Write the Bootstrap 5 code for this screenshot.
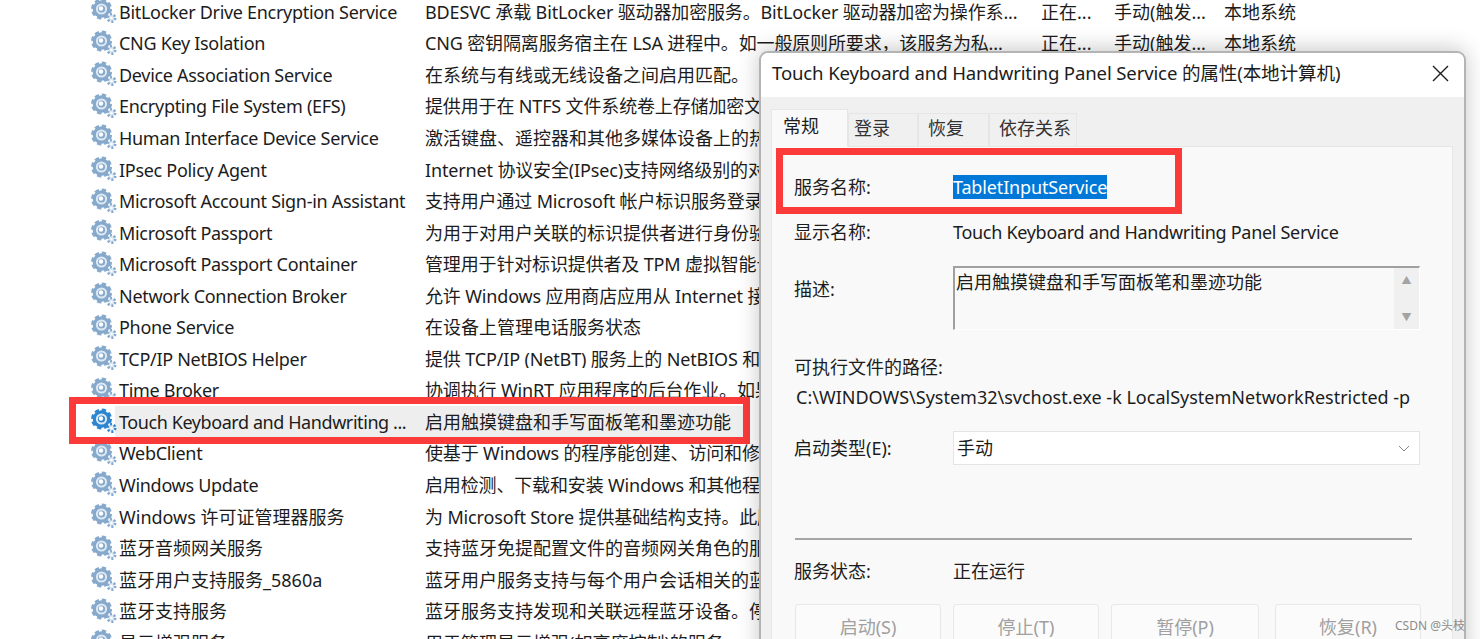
<!DOCTYPE html>
<html lang="zh-CN">
<head>
    <meta charset="UTF-8">
    <title>Touch Keyboard and Handwriting Panel Service</title>
    <link rel="stylesheet" href="https://cdn.jsdelivr.net/npm/bootstrap@5.3.2/dist/css/bootstrap.min.css">
    <style>
        html, body { height: 639px; overflow: hidden; }
        body { font-family: "Noto Sans", "Noto Sans CJK SC", sans-serif; font-size: 18px; color: #1c1c1c; background: #fff; }

        .svc-list { margin-top: -4px; padding-left: 91px; }
        .svc-row { display: flex; align-items: center; height: 31.55px; white-space: nowrap; line-height: 1; }
        .svc-row > svg { width: 27px; height: 27px; flex: none; color: #86a9cc; }
        .svc-name { width: 307px; padding-left: 1px; letter-spacing: -.3px; flex: none; }
        .svc-desc { width: 616px; flex: none; letter-spacing: -.15px; overflow: hidden; }
        .svc-state { width: 73px; flex: none; }
        .svc-start { width: 110px; flex: none; }
        .svc-name.zh, .svc-desc.zh { letter-spacing: 0; }
        .svc-row.picked { width: 659px; background: linear-gradient(90deg, #fff 24px, #eeeeee 24px); }
        .svc-row.picked > svg { color: #2f86d0; }
        .svc-row.picked .svc-name { letter-spacing: -.42px; }
        .red-mark { position: absolute; border: 7px solid #fb3a3a; pointer-events: none; }
        .mark-row { left: 69px; top: 397px; width: 681px; height: 47px; }
        .mark-name { left: 776px; top: 148px; width: 406px; height: 66px; z-index: 3; }

        .svc-dialog { position: absolute; left: 759px; top: 51px; width: 707px; height: 640px; background: #f0f0f0; border: 2px solid #b4b4b4; border-radius: 9px 9px 0 0; box-shadow: 0 -2px 22px rgba(0, 0, 0, .22); overflow: hidden; }
        .dlg-title { height: 44px; background: #fff; padding: 0 15px 4px 11px; font-size: 18.6px; letter-spacing: -.15px; }
        .dlg-tabs { padding: 12px 0 0 10px; height: 49px; align-items: flex-end; }
        .dlg-tab { height: 33px; padding-left: 9px; line-height: 29px; background: #f0f0f0; border: 1px solid #e6e6e6; border-bottom: 0; color: #333; }
        .dlg-tab.on { width: 77px; height: 38px; padding-left: 11px; line-height: 32px; background: #f9f9f9; position: relative; top: 1px; color: #1c1c1c; }
        .tab-login { width: 70px; padding-left: 5px; }
        .tab-recover { width: 71px; }
        .tab-deps { width: 88px; }
        .dlg-pane { margin: 0 11px 0 10px; height: 560px; background: #f9f9f9; border: 1px solid #e6e6e6; padding-left: 22px; letter-spacing: -.3px; }
        .field-row { display: flex; align-items: center; }
        .field-label { width: 159px; flex: none; letter-spacing: 0; }
        .label-up { margin-bottom: 18px; }
        .row-service { height: 24px; margin-top: 28px; }
        .row-display { height: 24px; margin-top: 21px; }
        .row-desc { margin-top: 22px; }
        .row-path-label { margin-top: 25px; height: 24px; line-height: 24px; letter-spacing: 0; }
        .row-path { margin-top: 6px; height: 24px; line-height: 24px; padding-left: 2px; letter-spacing: 0; }
        .row-start { margin-top: 22px; }
        .row-state { height: 24px; margin-top: 19px; letter-spacing: 0; }
        .row-buttons { margin: 21px 0 0 1px; gap: 12px; }
        .picked-text { background: #0078d7; color: #fff; line-height: 24px; letter-spacing: -.15px; }
        .desc-box { position: relative; width: 467px; height: 64px; background: #f9f9f9; border-top: 2px solid #a0a0a0; border-left: 2px solid #a0a0a0; border-right: 1px solid #fff; border-bottom: 1px solid #fff; padding: 2px 0 0 1px; line-height: 24px; letter-spacing: 0; }
        .desc-scroll { position: absolute; right: 0; top: 0; bottom: 0; width: 25px; background: #f0f0f0; color: #a3a3a3; font-size: 10px; }
        .start-select { width: 467px; height: 34px; background: #fff; border: 1px solid #e4e4e4; padding: 0 9px 0 3px; letter-spacing: 0; }
        .dlg-rule { width: 617px; height: 2px; margin: 73px 0 0 1px; background: #a6a6a6; opacity: 1; border: 0; }
        .dlg-btn { width: 146px; height: 46px; padding: 0; font-size: 18px; border: 1px solid #e8e8e8; border-radius: 3px; background: #fbfbfb; color: #a0a0a0; }
        .dlg-btn:disabled { border-color: #e8e8e8; background: #fbfbfb; color: #a0a0a0; opacity: 1; }
        .btn-pause { width: 148px; }
        .btn-resume { margin-left: 4px; }
        .wm-text { position: absolute; right: 15px; top: 617px; font-size: 12px; color: #8c8c8c; z-index: 4; }
    </style>
</head>
<body>

    <svg width="0" height="0" class="position-absolute">
        <symbol id="gear" viewBox="0 0 27 27">
            <circle cx="10.5" cy="11" r="8.8" fill="currentColor" stroke="currentColor" stroke-width="3.4" stroke-dasharray="4.2 2.71"/>
            <circle cx="10.5" cy="11" r="5.6" fill="#dfe9f3"/>
            <circle cx="10.5" cy="11" r="3.6" fill="currentColor"/>
            <circle cx="10" cy="10.5" r="2.2" fill="#fff"/>
            <circle cx="20.5" cy="20" r="3.7" fill="#dfe9f3" stroke="currentColor" stroke-width="2.6" stroke-dasharray="2 1.87"/>
            <circle cx="20.5" cy="20" r="1.1" fill="#fff"/>
        </symbol>
    </svg>

    <div class="svc-list">
        <div class="svc-row"><svg><use href="#gear"/></svg><span class="svc-name">BitLocker Drive Encryption Service</span><span class="svc-desc">BDESVC 承载 BitLocker 驱动器加密服务。BitLocker 驱动器加密为操作系...</span><span class="svc-state">正在...</span><span class="svc-start">手动(触发...</span><span>本地系统</span></div>
        <div class="svc-row"><svg><use href="#gear"/></svg><span class="svc-name">CNG Key Isolation</span><span class="svc-desc">CNG 密钥隔离服务宿主在 LSA 进程中。如一般原则所要求，该服务为私...</span><span class="svc-state">正在...</span><span class="svc-start">手动(触发...</span><span>本地系统</span></div>
        <div class="svc-row"><svg><use href="#gear"/></svg><span class="svc-name">Device Association Service</span><span class="svc-desc zh">在系统与有线或无线设备之间启用匹配。</span></div>
        <div class="svc-row"><svg><use href="#gear"/></svg><span class="svc-name">Encrypting File System (EFS)</span><span class="svc-desc">提供用于在 NTFS 文件系统卷上存储加密文件的核心文件加密技术</span></div>
        <div class="svc-row"><svg><use href="#gear"/></svg><span class="svc-name">Human Interface Device Service</span><span class="svc-desc zh">激活键盘、遥控器和其他多媒体设备上的热按钮的使用</span></div>
        <div class="svc-row"><svg><use href="#gear"/></svg><span class="svc-name">IPsec Policy Agent</span><span class="svc-desc">Internet 协议安全(IPsec)支持网络级别的对等身份验证</span></div>
        <div class="svc-row"><svg><use href="#gear"/></svg><span class="svc-name">Microsoft Account Sign-in Assistant</span><span class="svc-desc">支持用户通过 Microsoft 帐户标识服务登录</span></div>
        <div class="svc-row"><svg><use href="#gear"/></svg><span class="svc-name">Microsoft Passport</span><span class="svc-desc zh">为用于对用户关联的标识提供者进行身份验证</span></div>
        <div class="svc-row"><svg><use href="#gear"/></svg><span class="svc-name">Microsoft Passport Container</span><span class="svc-desc">管理用于针对标识提供者及 TPM 虚拟智能卡</span></div>
        <div class="svc-row"><svg><use href="#gear"/></svg><span class="svc-name">Network Connection Broker</span><span class="svc-desc">允许 Windows 应用商店应用从 Internet 接收通知</span></div>
        <div class="svc-row"><svg><use href="#gear"/></svg><span class="svc-name">Phone Service</span><span class="svc-desc zh">在设备上管理电话服务状态</span></div>
        <div class="svc-row"><svg><use href="#gear"/></svg><span class="svc-name">TCP/IP NetBIOS Helper</span><span class="svc-desc">提供 TCP/IP (NetBT) 服务上的 NetBIOS 和名称解析</span></div>
        <div class="svc-row"><svg><use href="#gear"/></svg><span class="svc-name">Time Broker</span><span class="svc-desc">协调执行 WinRT 应用程序的后台作业。如果此服务</span></div>
        <div class="svc-row picked"><svg><use href="#gear"/></svg><span class="svc-name">Touch Keyboard and Handwriting ...</span><span class="svc-desc zh">启用触摸键盘和手写面板笔和墨迹功能</span></div>
        <div class="svc-row"><svg><use href="#gear"/></svg><span class="svc-name">WebClient</span><span class="svc-desc">使基于 Windows 的程序能创建、访问和修改基于</span></div>
        <div class="svc-row"><svg><use href="#gear"/></svg><span class="svc-name">Windows Update</span><span class="svc-desc">启用检测、下载和安装 Windows 和其他程序的更新</span></div>
        <div class="svc-row"><svg><use href="#gear"/></svg><span class="svc-name zh">Windows 许可证管理器服务</span><span class="svc-desc">为 Microsoft Store 提供基础结构支持。此服务</span></div>
        <div class="svc-row"><svg><use href="#gear"/></svg><span class="svc-name zh">蓝牙音频网关服务</span><span class="svc-desc zh">支持蓝牙免提配置文件的音频网关角色的服务</span></div>
        <div class="svc-row"><svg><use href="#gear"/></svg><span class="svc-name zh">蓝牙用户支持服务_5860a</span><span class="svc-desc zh">蓝牙用户服务支持与每个用户会话相关的蓝牙功能</span></div>
        <div class="svc-row"><svg><use href="#gear"/></svg><span class="svc-name zh">蓝牙支持服务</span><span class="svc-desc zh">蓝牙服务支持发现和关联远程蓝牙设备。停止</span></div>
        <div class="svc-row"><svg><use href="#gear"/></svg><span class="svc-name zh">显示增强服务</span><span class="svc-desc zh">用于管理显示增强(如亮度控制)的服务。</span></div>
    </div>

    <div class="red-mark mark-row"></div>
    <div class="red-mark mark-name"></div>

    <div class="svc-dialog">
        <div class="dlg-title d-flex align-items-center justify-content-between">
            <span>Touch Keyboard and Handwriting Panel Service 的属性(本地计算机)</span>
            <svg width="17" height="17" viewBox="0 0 17 17"><path d="M1 1l15 15M16 1L1 16" stroke="#1c1c1c" stroke-width="1.4" fill="none"/></svg>
        </div>
        <div class="dlg-tabs d-flex">
            <div class="dlg-tab on">常规</div>
            <div class="dlg-tab tab-login">登录</div>
            <div class="dlg-tab tab-recover">恢复</div>
            <div class="dlg-tab tab-deps">依存关系</div>
        </div>
        <div class="dlg-pane">
            <div class="field-row row-service"><span class="field-label">服务名称:</span><span class="picked-text">TabletInputService</span></div>
            <div class="field-row row-display"><span class="field-label">显示名称:</span><span>Touch Keyboard and Handwriting Panel Service</span></div>
            <div class="field-row row-desc"><span class="field-label label-up">描述:</span>
                <div class="desc-box">启用触摸键盘和手写面板笔和墨迹功能
                    <div class="desc-scroll d-flex flex-column align-items-center justify-content-between py-0"><span>▲</span><span>▼</span></div>
                </div>
            </div>
            <div class="row-path-label">可执行文件的路径:</div>
            <div class="row-path">C:\WINDOWS\System32\svchost.exe -k LocalSystemNetworkRestricted -p</div>
            <div class="field-row row-start"><span class="field-label">启动类型(E):</span>
                <div class="start-select d-flex align-items-center justify-content-between"><span>手动</span>
                    <svg width="12" height="7" viewBox="0 0 12 7"><path d="M1 1l5 5 5-5" stroke="#8a8a8a" fill="none"/></svg>
                </div>
            </div>
            <hr class="dlg-rule">
            <div class="field-row row-state"><span class="field-label">服务状态:</span><span>正在运行</span></div>
            <div class="d-flex row-buttons">
                <button class="btn dlg-btn" disabled>启动(S)</button>
                <button class="btn dlg-btn" disabled>停止(T)</button>
                <button class="btn dlg-btn btn-pause" disabled>暂停(P)</button>
                <button class="btn dlg-btn btn-resume" disabled>恢复(R)</button>
            </div>
        </div>
    </div>

    <div class="wm-text">CSDN @头枝</div>

    <script src="https://cdn.jsdelivr.net/npm/bootstrap@5.3.2/dist/js/bootstrap.bundle.min.js"></script>
</body>
</html>
